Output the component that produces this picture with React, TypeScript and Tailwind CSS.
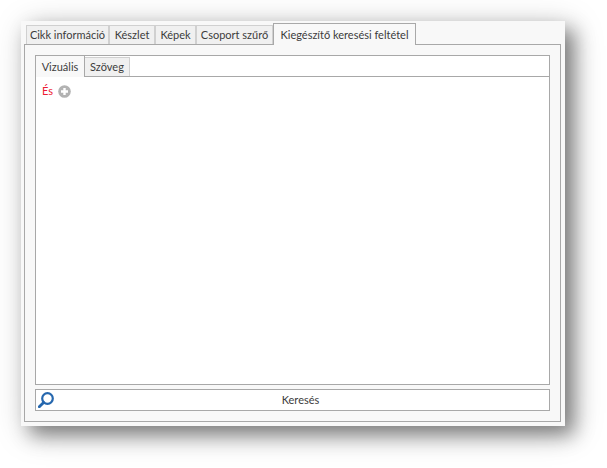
import { useState } from "react";

const mainTabs = [
  { label: "Cikk információ", width: "w-[83px]" },
  { label: "Készlet", width: "w-[46px]" },
  { label: "Képek", width: "w-[41px]" },
  { label: "Csoport szűrő", width: "w-[77px]" },
  { label: "Kiegészítő keresési feltétel", width: "w-[143px]" },
];

const editorTabs = ["Vizuális", "Szöveg"];

function MainTabs() {
  const [active, setActive] = useState(4);
  return (
    <div role="tablist" className="flex h-[21px] items-end pl-0.5">
      {mainTabs.map((tab, i) => (
        <button
          key={tab.label}
          role="tab"
          aria-selected={i === active}
          onClick={() => setActive(i)}
          className={
            i === active
              ? `z-10 -mb-px h-[22px] shrink-0 border border-b-0 border-[#a8a8a8] bg-[#f8f8f8] ${tab.width}`
              : `h-[19px] shrink-0 border border-b-0 border-[#d0d0d0] bg-[#f0f0f0] ${tab.width}`
          }
        >
          {tab.label}
        </button>
      ))}
    </div>
  );
}

function EditorTabs() {
  const [active, setActive] = useState(0);
  return (
    <div role="tablist" className="flex h-[21px] items-end border-b border-[#a8a8a8]">
      {editorTabs.map((label, i) => (
        <button
          key={label}
          role="tab"
          aria-selected={i === active}
          onClick={() => setActive(i)}
          className={
            i === active
              ? "z-10 -mb-px h-[21px] w-[49px] border-r border-[#a8a8a8] bg-[#f8f8f8]"
              : "h-[19px] w-[45px] border-t border-r border-[#d0d0d0] bg-[#f0f0f0]"
          }
        >
          {label}
        </button>
      ))}
    </div>
  );
}

function AddIcon() {
  return (
    <svg viewBox="0 0 13 13" className="size-[13px]" aria-hidden="true">
      <circle cx="6.5" cy="6.5" r="6.3" fill="#b2b2b2" />
      <path d="M6.5 3v7M3 6.5h7" stroke="#fff" strokeWidth="2.4" />
    </svg>
  );
}

function SearchIcon() {
  return (
    <svg viewBox="0 0 16 16" className="size-4" fill="none" stroke="#2567ae" aria-hidden="true">
      <circle cx="9.5" cy="6.5" r="5.3" strokeWidth="2.2" />
      <path d="M5.6 10.4 1.3 14.7" strokeWidth="2.8" strokeLinecap="round" />
    </svg>
  );
}

export default function App() {
  return (
    <main className="flex min-h-screen flex-col bg-white pt-[21px] pr-[42px] pb-[42px] pl-[21px] font-[Lato,'Noto_Sans',sans-serif] text-[11px] leading-4 whitespace-nowrap text-[#3c3c3c]">
      <section className="flex flex-1 flex-col bg-[#f8f8f8] pt-0.5 pr-1 pb-1 pl-[3px] shadow-[9px_9px_18px_rgba(0,0,0,0.42),6px_6px_32px_rgba(0,0,0,0.22)]">
        <MainTabs />
        <div role="tabpanel" className="flex flex-1 flex-col gap-1 border border-[#a8a8a8] p-2.5">
          <div className="flex flex-1 flex-col border border-[#a8a8a8] bg-white">
            <EditorTabs />
            <div role="tabpanel" className="flex items-center gap-[5px] px-1.5 py-1.5">
              <button className="text-[#ed1c34]">És</button>
              <button aria-label="Feltétel hozzáadása">
                <AddIcon />
              </button>
            </div>
          </div>
          <button className="flex h-[22px] items-center border border-[#a8a8a8] bg-white px-0.5">
            <SearchIcon />
            <span className="flex-1">Keresés</span>
          </button>
        </div>
      </section>
    </main>
  );
}
